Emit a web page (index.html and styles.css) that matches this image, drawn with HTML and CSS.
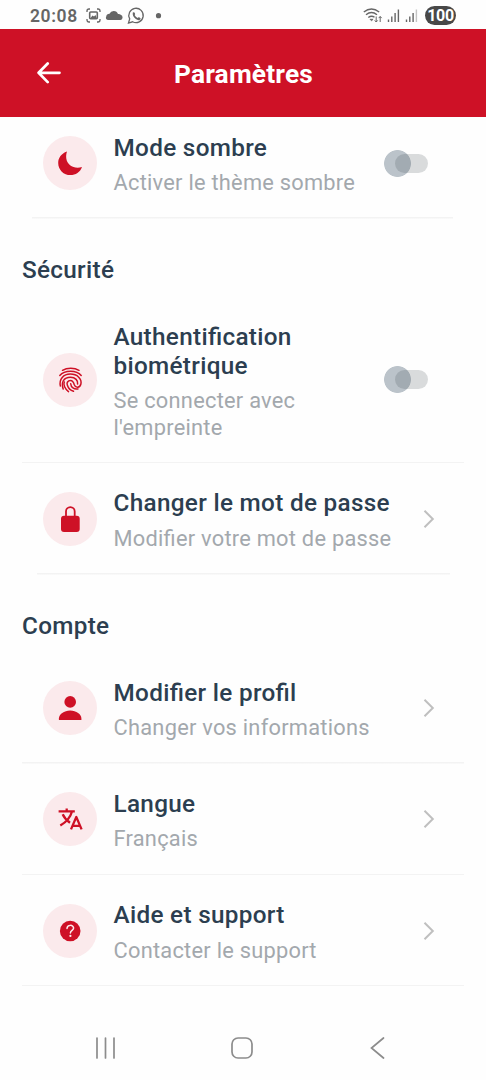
FILE: index.html
```html
<!DOCTYPE html>
<html lang="fr">
<head>
<meta charset="utf-8">
<title>Paramètres</title>
<link rel="stylesheet" href="styles.css">
</head>
<body>
<div class="screen">
  <div class="status">
    <span class="time">20:08</span>
    <svg class="status-left" width="80" height="29" viewBox="0 0 80 29" fill="none" stroke="#666" stroke-width="1.3">
      <path d="M2 12V11Q2 9 4 9H5M12 9h1q2 0 2 2v1M15 19v1q0 2-2 2h-1M5 22H4q-2 0-2-2v-1"/>
      <rect x="4.700" y="12" width="7.600" height="6.800" rx="1" stroke-width="1.600"/>
      <path d="M5.500 18l2-2.500 1.500 1 1.500-1.500 1.200 3z" fill="#666" stroke="none"/>
      <path d="M23.500 20H34.500A2.700 2.700 0 0 0 34.700 14.800Q33.500 13.600 32 14A4.600 4.600 0 0 0 23.500 13.800Q20.500 14 20.300 16.200Q18.800 19.500 22.500 20z" transform="translate(1 0)" fill="#666" stroke="none"/>
      <path d="M43.500 23l1.200-4.100a7.200 7.200 0 1 1 2.900 2.900z"/>
      <path d="M47.800 12.600q1.400-1.200 2.200.8.4 1-.4 1.600 1 2 3 3 .8-1.200 2-.5 1.900.9.600 2-1.600 1.500-4.400-.4-3.700-2.600-3-6.500z" fill="#666" stroke="none"/>
      <circle cx="73.500" cy="15.700" r="2.600" fill="#666" stroke="none"/>
    </svg>
    <svg class="status-right" width="58" height="29" viewBox="0 0 58 29" fill="none" stroke="#666" stroke-width="1.400">
      <path d="M.8 12Q8.500 6 16.200 12M3 14.800Q8.500 10.300 14 14.800M5.300 17.500Q8.500 15 11.500 17.200"/>
      <path d="M7 19.300l1.500 1.500 1.600-1.500z" fill="#666" stroke-width=".8"/>
      <path d="M13.200 16.500v5.500M11.700 20.400l1.500 1.600 1.500-1.600M17.200 22v-5.500M15.700 18.100l1.500-1.600 1.500 1.600" stroke-width="1"/>
      <path d="M25.500 19.500V22M28.800 16.500V22M32.100 13V22M35.400 9.500V22M43.500 19.500V22M46.800 16.500V22M50.100 13V22"/>
      <path d="M53.400 9.500V22" stroke="#c4c4c4"/>
    </svg>
    <span class="battery">100</span>
  </div>

  <header class="header">
    <svg class="back" width="24" height="22" viewBox="0 0 24 22" fill="none" stroke="#fff" stroke-width="2.700" stroke-linecap="round" stroke-linejoin="round"><path d="M10.700 1.500 1.600 10.800l9.100 9.300M2 10.800H22.500"/></svg>
    <h1>Paramètres</h1>
  </header>

  <main class="content">
    <div class="row row-dark">
      <svg class="icon" viewBox="0 0 54 54"><path d="M24 15.600C18.200 17.500 15.200 22.200 15.200 26.900C15.200 33.700 20.700 39.100 27.500 39.100C32.500 39.100 37.300 36.200 39 31C31.500 33.300 24.200 29.500 23.300 22.500C23 20 23.200 18 24 15.600z"/></svg>
      <div class="text"><div class="title">Mode sombre</div><div class="sub">Activer le thème sombre</div></div>
      <span class="switch"></span>
    </div>
    <h2>Sécurité</h2>
    <div class="row">
      <svg class="icon line" viewBox="0 0 54 54">
        <path d="M19.500 17.300C24 14.600 31.500 14.600 36 17.300"/>
        <path d="M16.800 22.500C21.500 16.800 33.500 16.800 38.200 22.500"/>
        <path d="M17.400 33C15.800 26 20.500 21.100 27.300 21.100C34.500 21.100 39 26 37.900 31C37 35 32.500 35.200 31.300 31.800C30.700 29.700 30 27.600 27.500 27.600C24.700 27.600 23.500 29.800 24.300 32C25.300 35.200 27.200 37.400 30.500 38.300"/>
        <path d="M20.200 36C17.800 29.400 20.700 24.300 27.500 24.300C32.500 24.300 35.100 27.600 34.600 31"/>
        <path d="M25.500 38.600C22 36 20 31.500 21.300 29"/>
        <path d="M27.700 30.700C28 34.500 31 36.500 35 35.900"/>
      </svg>
      <div class="text"><div class="title">Authentification<br>biométrique</div><div class="sub">Se connecter avec<br>l'empreinte</div></div>
      <span class="switch"></span>
    </div>
    <div class="row row-password">
      <svg class="icon" viewBox="0 0 54 54"><rect x="18" y="23.700" width="18.700" height="16.300" rx="3"/><path d="M23 25v-5.500a4.350 4.350 0 0 1 8.700 0V25" fill="none" stroke="#ce1126" stroke-width="1.800"/></svg>
      <div class="text"><div class="title">Changer le mot de passe</div><div class="sub">Modifier votre mot de passe</div></div>
      <svg class="chevron" viewBox="0 0 12 20"><path d="M1.500 1.800 9.800 10l-8.300 8.200"/></svg>
    </div>
    <h2>Compte</h2>
    <div class="row">
      <svg class="icon" viewBox="0 0 54 54"><circle cx="27.200" cy="20.900" r="5.800"/><path d="M15.900 38.900v-1.300c0-4.300 5.200-8 11.300-8s11.200 3.700 11.200 8v1.300z"/></svg>
      <div class="text"><div class="title">Modifier le profil</div><div class="sub">Changer vos informations</div></div>
      <svg class="chevron" viewBox="0 0 12 20"><path d="M1.500 1.800 9.800 10l-8.300 8.200"/></svg>
    </div>
    <div class="row">
      <svg class="icon glyph" viewBox="0 0 54 54"><path d="M15.600 19.300H31.800M23.700 19V16.400M29 19.500C27.300 25.700 23 30.200 17.300 33.600M19.700 22.300C21.300 26.200 23.800 28.500 27 30.800M28 37.400 33.300 25l5.300 12.400M30 33.800h6.700"/></svg>
      <div class="text"><div class="title">Langue</div><div class="sub">Français</div></div>
      <svg class="chevron" viewBox="0 0 12 20"><path d="M1.500 1.800 9.800 10l-8.300 8.200"/></svg>
    </div>
    <div class="row">
      <svg class="icon" viewBox="0 0 54 54"><circle cx="27.200" cy="27" r="10.300"/><path d="M24 24.500c.1-4.100 6.600-4.100 6.600-.4 0 2.300-3.200 2.400-3.200 5" fill="none" stroke="#fbeaec" stroke-width="1.500" stroke-linecap="round"/><circle cx="27.400" cy="31.900" r="1.100" fill="#fbeaec"/></svg>
      <div class="text"><div class="title">Aide et support</div><div class="sub">Contacter le support</div></div>
      <svg class="chevron" viewBox="0 0 12 20"><path d="M1.500 1.800 9.800 10l-8.300 8.200"/></svg>
    </div>
  </main>

  <nav class="nav">
    <svg width="22" height="22" viewBox="0 0 22 22"><path d="M2 1v20M10.500 1v20M19 1v20"/></svg>
    <svg width="22" height="22" viewBox="0 0 22 22"><rect x="1" y="1" width="20" height="20" rx="6"/></svg>
    <svg width="15" height="22" viewBox="0 0 15 22"><path d="M13.500 1 1.500 11l12 10"/></svg>
  </nav>
</div>
</body>
</html>
```
FILE: styles.css
```css
* { box-sizing: border-box; }
body { margin: 0; background: #fefefe; font-family: Roboto, "Liberation Sans", sans-serif; font-feature-settings: "liga" 1; }
.screen { width: 486px; height: 1080px; overflow: hidden; display: flex; flex-direction: column; }
svg { display: block; flex: none; }

.status { height: 29px; flex: none; display: flex; align-items: center; padding: 2px 30px 0 30px; }
.time { width: 55px; font-size: 17.500px; font-weight: 600; letter-spacing: 0.600px; color: #666; }
.status-left, .status-right { margin-top: -2px; }
.status-right { margin-left: 198px; }
.battery { width: 31px; height: 19px; margin-left: 4px; flex: none; border-radius: 10px; background: #484848; color: #fff; font-size: 16px; font-weight: 700; line-height: 19px; text-align: center; letter-spacing: -0.300px; }

.header { height: 88px; flex: none; display: flex; align-items: center; background: #ce1126; color: #fff; position: relative; z-index: 1; padding: 2px 37px; }
.header h1 { flex: 1; margin: 2px 25px 0 2px; font-size: 26.300px; font-weight: 700; letter-spacing: 0.200px; text-align: center; }
.back { width: 24px; height: 22px; }

.content { margin-top: -9.500px; padding: 0 22px; flex: 1; }
h2 { height: 78px; margin: 0; padding-top: 36px; font-size: 24.300px; line-height: 29px; font-weight: 500; letter-spacing: 0.300px; color: #2c3e50; }
.row { display: flex; align-items: center; padding: 25px 21px 22.700px; background: linear-gradient(#f3f3f3, #f3f3f3) 0 100% / 442px 1.500px no-repeat; }
.row-dark { background-position: 10px 100%; background-size: 421px 1.500px; }
.row-password { background-position: 15px 100%; background-size: 413px 1.500px; }
.icon { width: 54px; height: 54px; margin-bottom: 2.500px; border-radius: 50%; background: #fbeaec; fill: #ce1126; }
.icon.line { fill: none; stroke: #ce1126; stroke-width: 1.500; stroke-linecap: round; }
.icon.glyph { fill: none; stroke: #ce1126; stroke-width: 2.300; stroke-linejoin: round; }
.text { flex: 1; margin-left: 16.500px; white-space: nowrap; }
.title { font-size: 24.300px; line-height: 29.200px; font-weight: 500; letter-spacing: 0.310px; color: #2c3e50; }
.sub { margin-top: 8.300px; font-size: 21.800px; line-height: 26.100px; letter-spacing: 0.260px; color: #a3a8ad; }
.switch { width: 44px; height: 27px; flex: none; margin: 0 15px 2.500px 0; background: radial-gradient(circle at 13.500px 13.500px, #bbc3ca 13px, transparent 13.800px); position: relative; }
.switch::before { content: ""; position: absolute; left: 10.500px; top: 4px; width: 33.500px; height: 19px; border-radius: 10px; background: rgba(60, 70, 75, .19); }
.chevron { width: 12px; height: 20px; margin: 0 8px 2.500px 0; fill: none; stroke: #bfbfbf; stroke-width: 2; }

.nav { height: 65px; flex: none; display: flex; align-items: flex-start; justify-content: space-between; padding: 0 101px 0 95px; }
.nav svg { margin-top: 22px; fill: none; stroke: #8c8c8c; stroke-width: 1.700; stroke-linecap: round; }
.nav svg:nth-child(2) { margin-right: 4px; }
```
